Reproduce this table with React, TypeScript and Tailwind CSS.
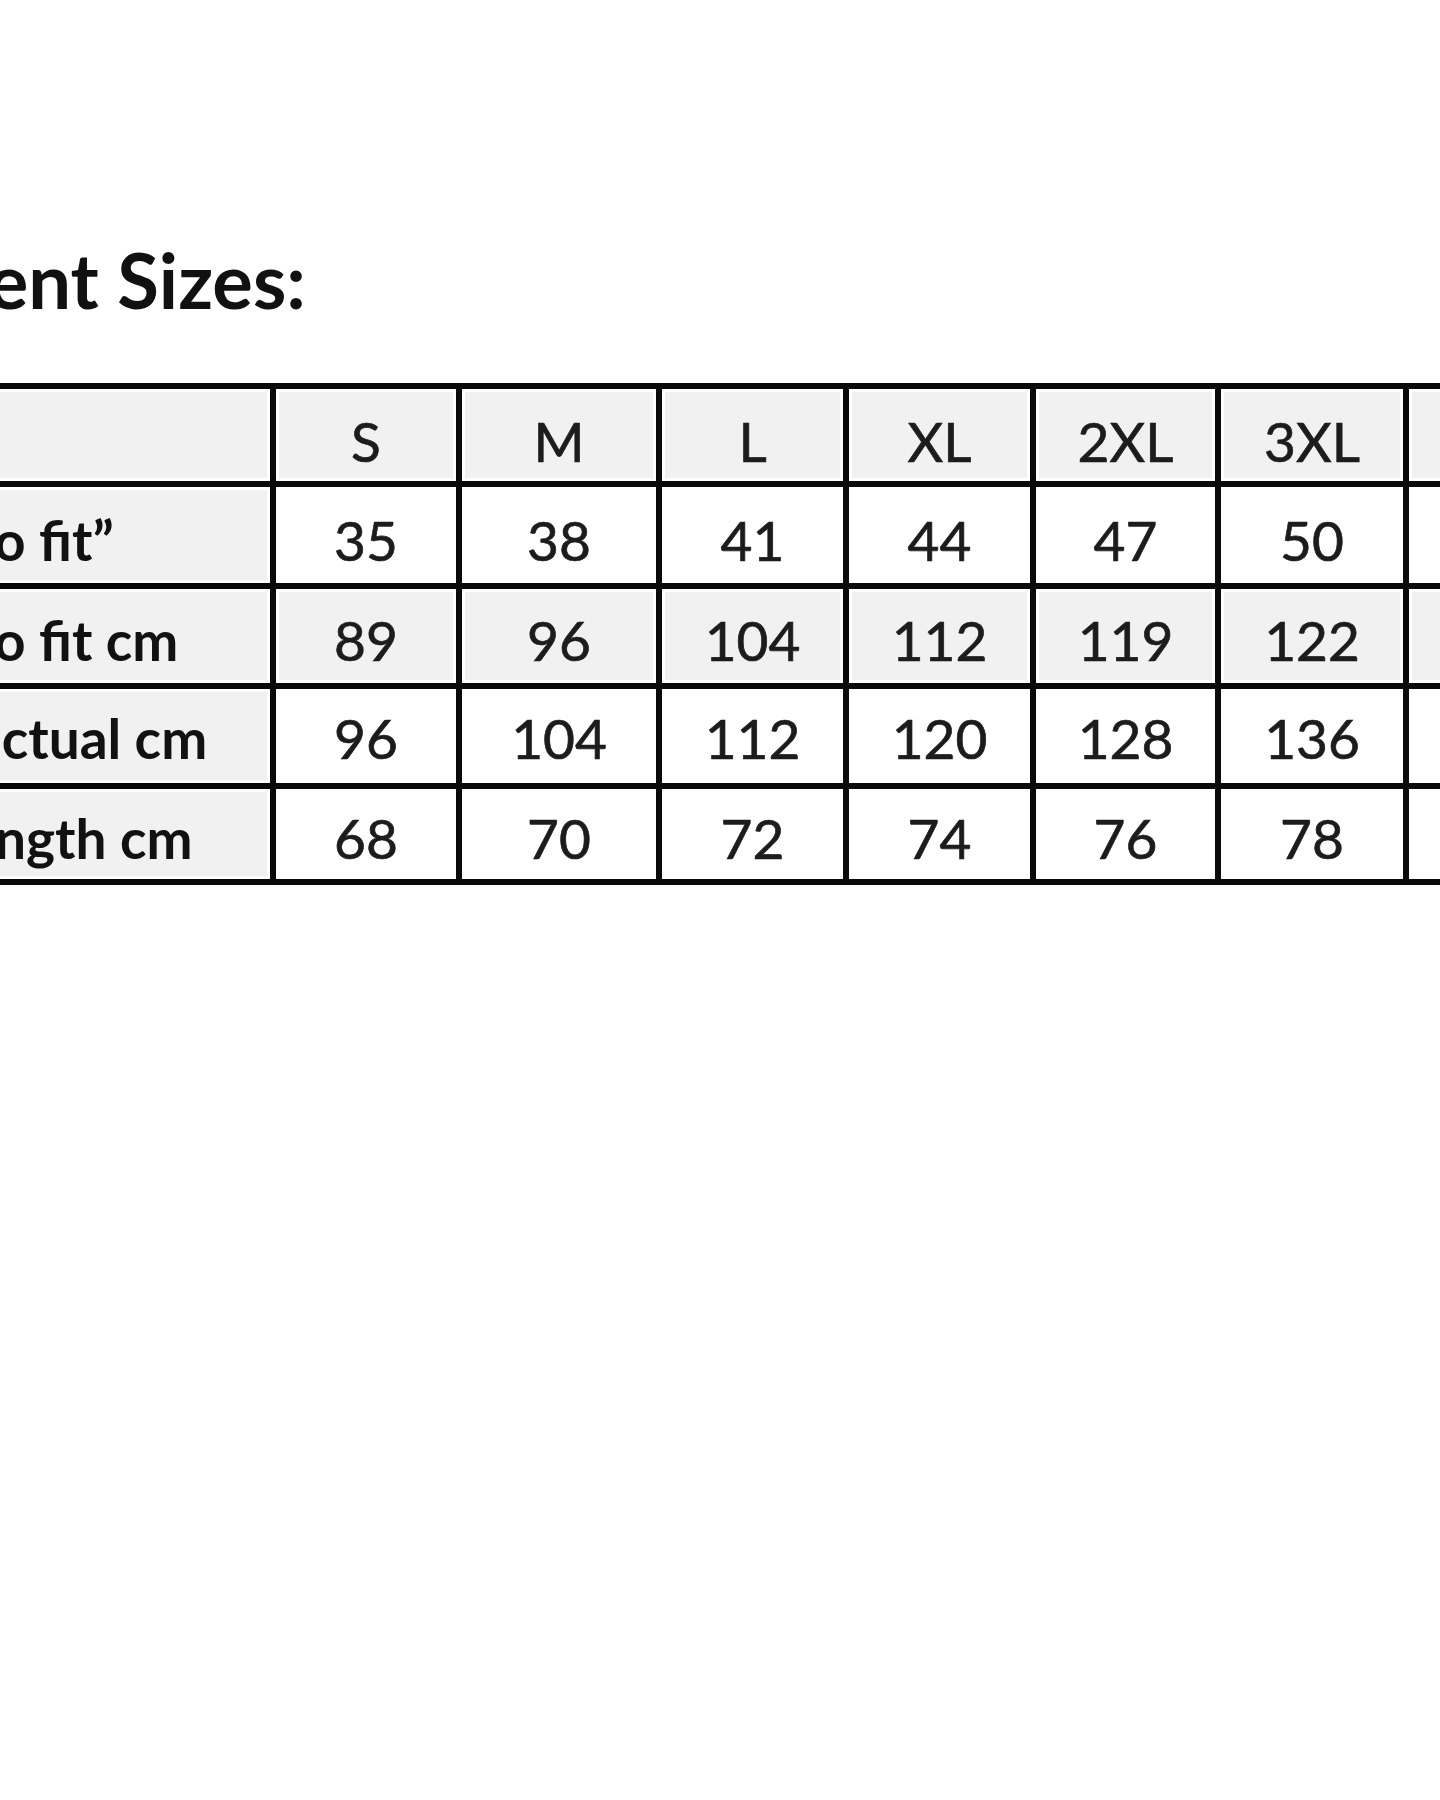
import React from "react";

const sizes = ["S", "M", "L", "XL", "2XL", "3XL", "4XL"];
const rows: { label: string; values: string[]; shaded: boolean; pt: string }[] = [
  { label: "Chest to fit\u201D", values: ["35", "38", "41", "44", "47", "50", "53"], shaded: false, pt: "pt-[26px]" },
  { label: "Chest to fit cm", values: ["89", "96", "104", "112", "119", "122", "127"], shaded: true, pt: "pt-[24px]" },
  { label: "Chest actual cm", values: ["96", "104", "112", "120", "128", "136", "144"], shaded: false, pt: "pt-[22px]" },
  { label: "Back length cm", values: ["68", "70", "72", "74", "76", "78", "80"], shaded: false, pt: "pt-[22px]" },
];

const font = { fontFamily: "Lato, 'Open Sans', sans-serif" };

export default function App() {
  return (
    <div className="w-[1440px] h-[1800px] bg-white overflow-hidden" style={font}>
      <div className="-ml-[194px] pt-[242px] w-[1700px]">
        <h1 className="-ml-[4px] text-[76px] leading-[76px] font-bold text-[#111] whitespace-nowrap">
          Garment Sizes:
        </h1>
        <div className="mt-[65px] inline-grid bg-[#0a0a0a] p-[6px] gap-[6px] grid-cols-[458px_180px_194px_181px_181px_179px_182px_182px] grid-rows-[92px_96px_94px_94px_90px]">
          <div className="bg-[#f1f1f1] shadow-[inset_0_0_0_3px_#fff]" />
          {sizes.map((s) => (
            <div
              key={s}
              className="bg-[#f1f1f1] shadow-[inset_0_0_0_3px_#fff] flex justify-center pt-[25px] text-[55px] leading-[55px] text-[#1c1c1c] [-webkit-text-stroke:0.7px_#1c1c1c]"
            >
              {s}
            </div>
          ))}
          {rows.map((r) => (
            <React.Fragment key={r.label}>
              <div
                className={
                  "bg-[#f1f1f1] shadow-[inset_0_0_0_3px_#fff] pl-[7px] text-[55px] leading-[55px] font-bold text-[#111] whitespace-nowrap " +
                  r.pt
                }
              >
                {r.label}
              </div>
              {r.values.map((v, i) => (
                <div
                  key={i}
                  className={
                    (r.shaded ? "bg-[#f1f1f1] shadow-[inset_0_0_0_3px_#fff] " : "bg-white ") +
                    "flex justify-center text-[55px] leading-[55px] text-[#1c1c1c] [-webkit-text-stroke:0.7px_#1c1c1c] " +
                    r.pt
                  }
                >
                  {v}
                </div>
              ))}
            </React.Fragment>
          ))}
        </div>
      </div>
    </div>
  );
}
